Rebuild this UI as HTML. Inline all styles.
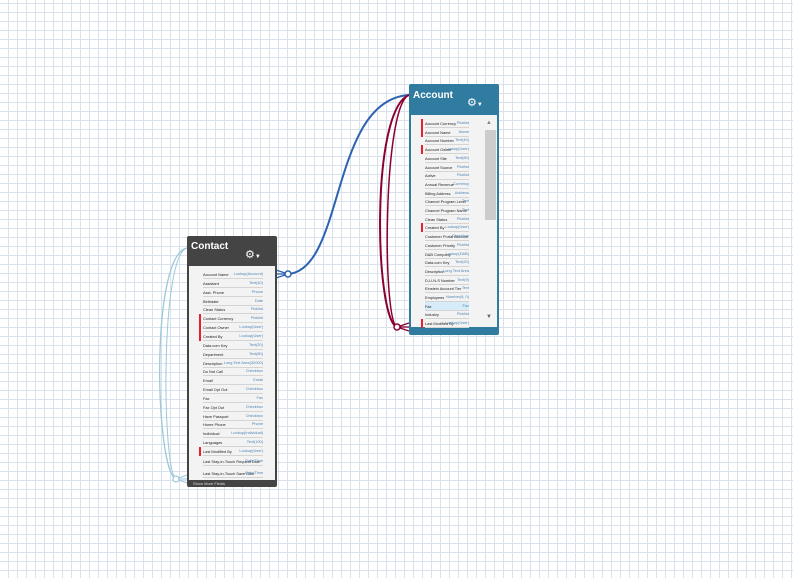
<!DOCTYPE html>
<html><head><meta charset="utf-8"><style>
*{margin:0;padding:0;box-sizing:border-box}
body{width:793px;height:578px;overflow:hidden;font-family:"Liberation Sans",sans-serif;
background-color:#fff;
background-image:linear-gradient(to right,#d9e2ec 1px,transparent 1px),linear-gradient(to bottom,#d9e2ec 1px,transparent 1px);
background-size:9px 9px;background-position:8px 3px;position:relative}
.box{position:absolute;border-radius:2px;overflow:hidden}
.hdr{position:absolute;left:0;right:0;top:0;color:#fff;font-weight:bold;font-size:10px;padding:5px 0 0 4px}
.gear{position:absolute;font-size:11px;color:#fff;line-height:11px}
.body{position:absolute;background:#f1f1f1}
.row{position:absolute;height:9px;border-bottom:1px solid #d4d4d4;font-size:3.9px;color:#222;white-space:nowrap}
.row span{position:absolute;right:0;top:1px;color:#4f86b8}
.row b{font-weight:normal;position:absolute;left:0;top:2px}
.req{position:absolute;width:2px;height:9px;background:#e8202c}
</style></head><body>
<svg width="793" height="578" style="position:absolute;left:0;top:0">
<path d="M288 274 C345 270 330 100 409 95" stroke="#2d62b0" stroke-width="2" fill="none"/>
<path d="M276 270 L288 274 M276 278 L288 274 M276 274 L288 274" stroke="#2d62b0" stroke-width="1.3"/>
<circle cx="288" cy="274" r="3" fill="#fff" stroke="#2d62b0" stroke-width="1.5"/>
<path d="M409 95 C370 110 375 320 397 327" stroke="#8b0030" stroke-width="2" fill="none"/>
<path d="M409 95 C383 105 382 320 397 327" stroke="#8b0030" stroke-width="1.5" fill="none"/>
<path d="M397 327 L409 323 M397 327 L409 331 M397 327 L409 327" stroke="#8b0030" stroke-width="1.3"/>
<circle cx="397" cy="327" r="3" fill="#fff" stroke="#8b0030" stroke-width="1.5"/>
<path d="M187 248 C150 255 155 470 176 479" stroke="#9cc8d8" stroke-width="1.3" fill="none"/>
<path d="M187 248 C160 255 162 470 176 479" stroke="#9cc8d8" stroke-width="1" fill="none"/>
<path d="M176 479 L187 475 M176 479 L187 483 M176 479 L187 479" stroke="#9cc8d8" stroke-width="1"/>
<circle cx="176" cy="479" r="3" fill="#fff" stroke="#9cc8d8" stroke-width="1.2"/>
</svg>

<div class="box" style="left:187px;top:236px;width:90px;height:251px;background:#444">
<div class="hdr">Contact</div>
<div class="gear" style="left:58px;top:14px">⚙<span style="font-size:6px">▼</span></div>
<div class="body" style="left:2px;top:30px;width:86px;height:214px;background:#f3f3f3"></div>
<div style="position:absolute;left:6px;top:245px;font-size:4px;color:#ddd">Show More Fields</div>
</div>
<div id="c" style="position:absolute;left:199px;top:270px;width:64px;height:210px"></div>

<div class="box" style="left:409px;top:84px;width:90px;height:251px;background:#2f7ca0">
<div class="hdr" style="top:1px">Account</div>
<div class="gear" style="left:58px;top:14px">⚙<span style="font-size:6px">▼</span></div>
<div class="body" style="left:2px;top:31px;width:86px;height:212px;background:#f3f3f3"></div>
<div style="position:absolute;left:76px;top:46px;width:11px;height:90px;background:#ccc"></div>
<div style="position:absolute;left:77px;top:36px;font-size:6px;color:#888">▲</div>
<div style="position:absolute;left:77px;top:230px;font-size:6px;color:#666">▼</div>
</div>
<div id="a" style="position:absolute;left:421px;top:119px;width:48px;height:210px;overflow:hidden"></div>

<script>
function fill(id,rows,step,pad){var el=document.getElementById(id),h='';
rows.forEach(function(r,i){var y=i*step+(r[3]||0);
if(r[2])h+='<div class="req" style="left:0;top:'+y+'px"></div>';
h+='<div class="row" style="left:'+pad+'px;right:0;top:'+y+'px'+(r[4]?';background:#d6ecf8':'')+'"><b>'+r[0]+'</b><span>'+r[1]+'</span></div>';});
el.innerHTML=h;}
fill('c',[["Account Name","Lookup(Account)"],["Assistant","Text(40)"],["Asst. Phone","Phone"],["Birthdate","Date"],["Clean Status","Picklist"],["Contact Currency","Picklist",1],["Contact Owner","Lookup(User)",1],["Created By","Lookup(User)",1],["Data.com Key","Text(20)"],["Department","Text(80)"],["Description","Long Text Area(32000)"],["Do Not Call","Checkbox"],["Email","Email"],["Email Opt Out","Checkbox"],["Fax","Fax"],["Fax Opt Out","Checkbox"],["Have Passport","Checkbox"],["Home Phone","Phone"],["Individual","Lookup(Individual)"],["Languages","Text(100)"],["Last Modified By","Lookup(User)",1],["Last Stay-in-Touch Request Date","Date/Time",0,1],["Last Stay-in-Touch Save Date","Date/Time",0,4]],8.85,4);
fill('a',[["Account Currency","Picklist",1],["Account Name","Name",1],["Account Number","Text(40)"],["Account Owner","Lookup(User)",1],["Account Site","Text(80)"],["Account Source","Picklist"],["Active","Picklist"],["Annual Revenue","Currency"],["Billing Address","Address"],["Channel Program Level","Text"],["Channel Program Name","Text"],["Clean Status","Picklist"],["Created By","Lookup(User)",1],["Customer Portal Account","Checkbox"],["Customer Priority","Picklist"],["D&B Company","Lookup(D&B)"],["Data.com Key","Text(20)"],["Description","Long Text Area"],["D-U-N-S Number","Text(9)"],["Einstein Account Tier","Text"],["Employees","Number(8, 0)"],["Fax","Fax",0,0,1],["Industry","Picklist"],["Last Modified By","Lookup(User)",1]],8.7,4);
</script>
</body></html>
